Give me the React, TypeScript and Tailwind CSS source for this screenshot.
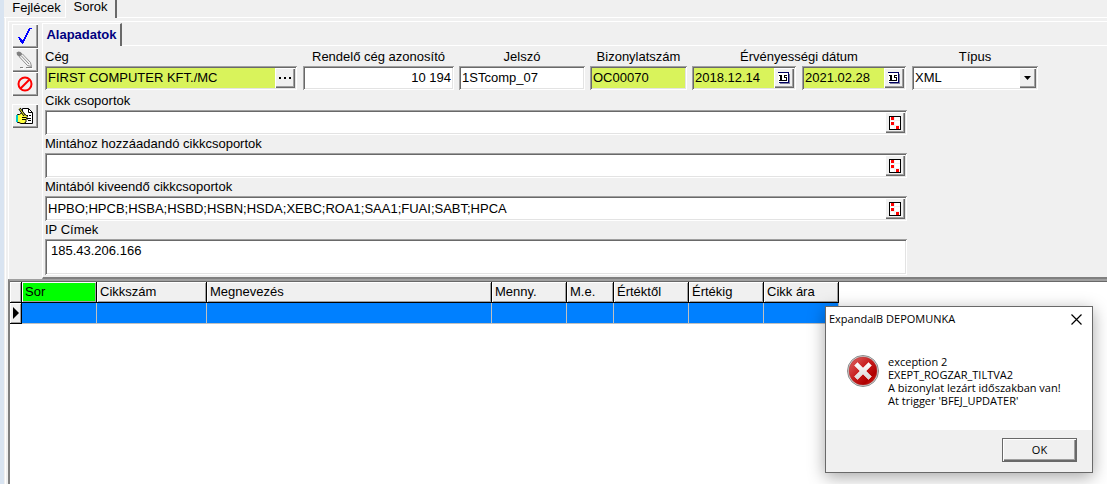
import { useState, type ReactNode } from "react";

const sunken =
  "p-[2px] shadow-[inset_1px_1px_#a0a0a0,inset_-1px_-1px_#ffffff,inset_2px_2px_#696969,inset_-2px_-2px_#e3e3e3]";
const raised =
  "bg-[#f0f0f0] shadow-[inset_1px_1px_#ffffff,inset_-1px_-1px_#696969,inset_-2px_-2px_#a0a0a0]";

function ToolButton({ label, children }: { label: string; children: ReactNode }) {
  return (
    <button aria-label={label} className={`flex h-6 w-[26px] items-center justify-center ${raised}`}>
      {children}
    </button>
  );
}

function CheckIcon() {
  return (
    <svg width="16" height="18" viewBox="0 0 16 18" shapeRendering="crispEdges">
      <path
        d="M12 1h3v1h-2v2h-1v2h-1v2h-1v2h-1v2h-1v2h-1v2h-1v1H5v-1H4v-1H3v-2H2v-2H1v-1h2v1h1v1h1v1h1v-1h1v-2h1V8h1V6h1V4h1V2h1z"
        fill="#0000ff"
      />
    </svg>
  );
}

function PencilIcon() {
  return (
    <svg width="18" height="18" viewBox="0 0 18 18" fill="none">
      <path d="M5 6.500l8.500 8.500M7.500 4l8 8.500M12 16.500l4 .5-1-4M5 17.500h3M11 17.500h6" stroke="#fff" />
      <path d="M.5 1.500l2-1 2 .5 2 2-3 3-2.500-2z" fill="#808080" />
      <path d="M3.500 6l8 8.500M6.500 3l8 8.500M11.500 14.500l4 1-1-4M5 4.500l8 8.500" stroke="#808080" strokeWidth="0.900" />
      <path d="M4 16.500h3M10 16.500h6" stroke="#808080" />
    </svg>
  );
}

function ForbidIcon() {
  return (
    <svg width="16" height="16" viewBox="0 0 16 16" fill="none" stroke="#ff0000" strokeWidth="2">
      <circle cx="8" cy="8" r="6.5" />
      <path d="M3.5 12.5l9-9" />
    </svg>
  );
}

function HandNoteIcon() {
  return (
    <svg width="18" height="18" viewBox="0 0 18 18">
      <path d="M6.500 1.500h6l4 4v11h-10z" fill="#fff" stroke="#000" />
      <path d="M12.500 1.500v4h4M11 8.500h1M13 8.500h2M11 11.500h4M12 13.500h3" fill="none" stroke="#000" />
      <path d="M1.500 7.500h2l2-1.500 3 1 3 2.500-1 1.500.5 1.500-1 1v1.500l-2 1.500h-3l-2-1h-1.500z" fill="#ffff40" stroke="#000" />
      <path d="M6 10.500h4M6 12.500h4" stroke="#000" />
      <path d="M0 8h2v7H0z" fill="#00c8c8" />
      <path d="M3.500 1.500l5 7" stroke="#000" strokeWidth="2.500" />
      <path d="M3.500 1.500l5 7" stroke="#ffff40" />
    </svg>
  );
}

function CalendarIcon() {
  return (
    <svg width="12" height="12" viewBox="0 0 12 12" shapeRendering="crispEdges">
      <path d="M2 2h10v10H2z" fill="#8080a0" />
      <path d="M0 1h11v10H0z" fill="#fff" />
      <path d="M0 0h11v1H0zM10 1h1v10h-1zM1 10h10v1H1z" fill="#000060" />
      <path d="M2 3h2v5h1v1H1V8h1V4H1V3zM6 3h3v1H7v1h2v1H6zM8 6h1v2H8zM5 8h4v1H5z" fill="#000" />
    </svg>
  );
}

function ListIcon() {
  return (
    <svg width="12" height="14" viewBox="0 0 12 14" shapeRendering="crispEdges">
      <path d="M0 0h12v14H0z" fill="#000" />
      <path d="M1 1h10v12H1z" fill="#fff" />
      <path d="M5 1h1v12H5zM1 4h10v1H1zM1 9h10v1H1z" fill="#f0f0f0" />
      <path d="M2 1h3v3H2zM2 6h3v3H2zM7 10h3v3H7z" fill="#ff0000" />
    </svg>
  );
}

type FieldProps = {
  id: string;
  label: string;
  value: string;
  width: string;
  tint?: boolean;
  alignRight?: boolean;
  button?: ReactNode;
  buttonLabel?: string;
};

function Box({ id, value, label, tint, alignRight, button, buttonLabel, height }: Omit<FieldProps, "width"> & { height: string }) {
  return (
    <div className={`flex ${height} ${sunken} ${tint ? "bg-[#d9f35b]" : "bg-white"}`}>
      <input
        id={id}
        aria-label={label}
        defaultValue={value}
        className={`min-w-0 flex-1 bg-transparent px-px outline-none ${alignRight ? "text-right" : ""}`}
      />
      {button && (
        <button aria-label={buttonLabel} className={`flex w-5 shrink-0 items-center justify-center ${raised}`}>
          {button}
        </button>
      )}
    </div>
  );
}

function TopField({ width, ...p }: FieldProps) {
  return (
    <div className={width}>
      <label htmlFor={p.id} className={`block h-[18px] leading-[18px] ${p.id === "ceg" ? "" : "text-center"}`}>
        {p.label}
      </label>
      <Box {...p} height="h-6" />
    </div>
  );
}

function WideField({ id, label, value }: { id: string; label: string; value: string }) {
  return (
    <div>
      <label htmlFor={id} className="block h-[18px] leading-[18px]">
        {label}
      </label>
      <Box id={id} label={label} value={value} height="h-[25px]" button={<ListIcon />} buttonLabel={`${label} lista`} />
    </div>
  );
}

const columns = [
  { name: "Sor", width: "w-[75px]" },
  { name: "Cikkszám", width: "w-[110px]" },
  { name: "Megnevezés", width: "w-[285px]" },
  { name: "Menny.", width: "w-[75px]" },
  { name: "M.e.", width: "w-[47px]" },
  { name: "Értéktől", width: "w-[75px]" },
  { name: "Értékig", width: "w-[75px]" },
  { name: "Cikk ára", width: "w-[75px]" },
];

function ItemTable() {
  return (
    <table className="w-[829px] table-fixed border-separate border-spacing-0">
      <thead>
        <tr className="h-[21px]">
          <th className="w-3 border-r border-b border-black bg-[#f0f0f0] p-0 shadow-[inset_1px_1px_#fff,inset_-1px_-1px_#a0a0a0]" />
          {columns.map((c) => (
            <th
              key={c.name}
              className={`${c.width} border-r border-b border-black p-0 pl-[3px] text-left leading-5 font-normal ${
                c.name === "Sor" ? "bg-[#00ff00]" : "bg-[#f0f0f0]"
              } shadow-[inset_1px_1px_#fff,inset_-1px_-1px_#a0a0a0]`}
            >
              {c.name}
            </th>
          ))}
        </tr>
      </thead>
      <tbody>
        <tr className="h-[21px]">
          <td className="border-r border-b border-black bg-[#f0f0f0] p-0 shadow-[inset_1px_1px_#fff,inset_-1px_-1px_#a0a0a0]">
            <svg className="ml-[3px] block" width="6" height="12" viewBox="0 0 6 12">
              <path d="M0 0l6 6-6 6z" />
            </svg>
          </td>
          {columns.map((c) => (
            <td key={c.name} className="border-r border-b border-[#c0c0c0] bg-[#0080ff] p-0" />
          ))}
        </tr>
      </tbody>
    </table>
  );
}

function ErrorDialog({ onClose }: { onClose: () => void }) {
  return (
    <div
      role="dialog"
      aria-labelledby="dialog-title"
      className="absolute top-[306px] right-[14px] w-[268px] border border-[#696969] bg-white font-['Open_Sans','Noto_Sans',sans-serif] text-[11px] shadow-[0_4px_16px_rgba(0,0,0,0.35)]"
    >
      <div className="flex h-6 items-center justify-between pr-[10px] pl-[3px]">
        <h2 id="dialog-title" className="leading-4">
          ExpandalB DEPOMUNKA
        </h2>
        <button aria-label="Bezárás" onClick={onClose}>
          <svg width="11" height="11" viewBox="0 0 11 11" fill="none" stroke="#000" strokeWidth="1.200">
            <path d="M.5.5l10 10M10.500.5l-10 10" />
          </svg>
        </button>
      </div>
      <div className="flex h-[99px] gap-[9px] pt-6 pl-[21px]">
        <svg width="32" height="32" viewBox="0 0 32 32" className="shrink-0">
          <defs>
            <linearGradient id="disc" x1="0" y1="0" x2="1" y2="1">
              <stop offset="0" stopColor="#e06a6a" />
              <stop offset="0.45" stopColor="#c81e1e" />
              <stop offset="0.75" stopColor="#b00000" />
              <stop offset="1" stopColor="#e03020" />
            </linearGradient>
            <linearGradient id="cross" x1="0" y1="0" x2="0" y2="1">
              <stop offset="0" stopColor="#ffffff" />
              <stop offset="1" stopColor="#d8d8d8" />
            </linearGradient>
          </defs>
          <circle cx="16" cy="16" r="15.500" fill="#d8d8d8" stroke="#8c8c8c" />
          <circle cx="16" cy="16" r="14" fill="url(#disc)" stroke="#a33" strokeWidth="0.500" />
          <path
            d="M10.500 7.500L16 13l5.500-5.500 3 3L19 16l5.500 5.500-3 3L16 19l-5.500 5.500-3-3L13 16l-5.500-5.500z"
            fill="url(#cross)"
            stroke="#fff"
            strokeWidth="0.500"
            strokeLinejoin="round"
          />
        </svg>
        <p className="leading-[13px] whitespace-nowrap">
          exception 2<br />
          EXEPT_ROGZAR_TILTVA2
          <br />
          A bizonylat lezárt időszakban van!
          <br />
          At trigger 'BFEJ_UPDATER'
        </p>
      </div>
      <div className="flex h-[42px] justify-end bg-[#f0f0f0] pt-2 pr-[15px]">
        <button
          onClick={onClose}
          className="h-6 w-[75px] border border-[#696969] bg-[#f0f0f0] leading-4 shadow-[inset_1px_1px_#fff,inset_-1px_-1px_#696969,inset_-2px_-2px_#a0a0a0]"
        >
          OK
        </button>
      </div>
    </div>
  );
}

export default function App() {
  const [open, setOpen] = useState(true);
  return (
    <div className="relative flex min-h-screen bg-[#f0f0f0] font-['Liberation_Sans',Arial,sans-serif] text-[13px] text-black">
      <div className="w-1 shrink-0 bg-[#d9e4f1]" />
      <div className="flex min-w-0 flex-1 flex-col">
        <nav className="flex h-[18px]">
          <button className="w-[62px] border-r border-b border-white pb-px pl-1 leading-4">Fejlécek</button>
          <button className="w-[51px] border-r-2 border-[#696969] pb-1 leading-[14px]">Sorok</button>
          <div className="flex-1 border-b border-white" />
        </nav>
        <main className="ml-px flex flex-1 flex-col border-l border-white pt-[3px] pl-[2px]">
          <div className="flex border-t border-l border-white">
            <div className="flex w-[33px] shrink-0 flex-col pt-[2px] pl-[3px]">
              <ToolButton label="Mentés">
                <CheckIcon />
              </ToolButton>
              <ToolButton label="Szerkesztés">
                <PencilIcon />
              </ToolButton>
              <ToolButton label="Mégse">
                <ForbidIcon />
              </ToolButton>
              <div className="mt-2">
                <ToolButton label="Megjegyzés">
                  <HandNoteIcon />
                </ToolButton>
              </div>
            </div>
            <section className="min-w-0 flex-1 pt-px">
              <div className="flex h-[23px]">
                <button className="w-[80px] border-t border-r-2 border-l border-t-white border-r-[#696969] border-l-white font-bold text-[#000080]">
                  Alapadatok
                </button>
                <div className="flex-1 border-b border-white" />
              </div>
              <div className="border-b-2 border-l border-b-[#808080] border-l-white pt-[2px] pb-[2px] pl-[2px]">
                <div className="flex">
                  <TopField
                    id="ceg"
                    label="Cég"
                    value="FIRST COMPUTER KFT./MC"
                    width="w-[252px]"
                    tint
                    button={
                      <svg width="12" height="2" viewBox="0 0 12 2">
                        <path d="M0 0h2v2H0zM5 0h2v2H5zM10 0h2v2h-2z" />
                      </svg>
                    }
                    buttonLabel="Cég választása"
                  />
                  <TopField id="azon" label="Rendelő cég azonosító" value="10 194" width="ml-[6px] w-[151px]" alignRight />
                  <TopField id="jelszo" label="Jelszó" value="1STcomp_07" width="ml-[5px] w-[126px]" />
                  <TopField id="biz" label="Bizonylatszám" value="OC00070" width="ml-[5px] w-[97px]" tint />
                  <fieldset className="ml-[5px] w-[214px]">
                    <legend className="h-[18px] w-full text-center leading-[18px]">Érvényességi dátum</legend>
                    <div className="grid grid-cols-2 gap-[6px]">
                      <Box id="tol" label="Érvényesség kezdete" value="2018.12.14" tint height="h-6" button={<CalendarIcon />} buttonLabel="Kezdő nap" />
                      <Box id="ig" label="Érvényesség vége" value="2021.02.28" tint height="h-6" button={<CalendarIcon />} buttonLabel="Utolsó nap" />
                    </div>
                  </fieldset>
                  <div className="ml-[6px] w-[126px]">
                    <label htmlFor="tipus" className="block h-[18px] text-center leading-[18px]">
                      Típus
                    </label>
                    <div className={`relative flex h-6 bg-white ${sunken}`}>
                      <select id="tipus" className="w-full appearance-none pl-px outline-none">
                        <option>XML</option>
                      </select>
                      <span
                        className={`pointer-events-none absolute top-[2px] right-[2px] bottom-[2px] flex w-[17px] items-center justify-center ${raised}`}
                      >
                        <svg width="7" height="4" viewBox="0 0 7 4">
                          <path d="M0 0h7L3.500 4z" />
                        </svg>
                      </span>
                    </div>
                  </div>
                </div>
                <div className="mt-[2px] w-[862px]">
                  <WideField id="csop" label="Cikk csoportok" value="" />
                  <WideField id="hozza" label="Mintához hozzáadandó cikkcsoportok" value="" />
                  <WideField
                    id="kivesz"
                    label="Mintából kiveendő cikkcsoportok"
                    value="HPBO;HPCB;HSBA;HSBD;HSBN;HSDA;XEBC;ROA1;SAA1;FUAI;SABT;HPCA"
                  />
                  <label htmlFor="ip" className="block h-[18px] leading-[18px]">
                    IP Címek
                  </label>
                  <div className={`bg-white ${sunken}`}>
                    <textarea
                      id="ip"
                      defaultValue="185.43.206.166"
                      className="block h-8 w-full resize-none overflow-hidden pt-px pl-1 leading-[18px] outline-none"
                    />
                  </div>
                </div>
              </div>
            </section>
          </div>
          <div className="flex-1 border-t-2 border-l-2 border-t-[#a0a0a0] border-l-[#808080] bg-white">
            <div className="border-t border-[#696969]" />
            <ItemTable />
          </div>
        </main>
      </div>
      {open && <ErrorDialog onClose={() => setOpen(false)} />}
    </div>
  );
}
